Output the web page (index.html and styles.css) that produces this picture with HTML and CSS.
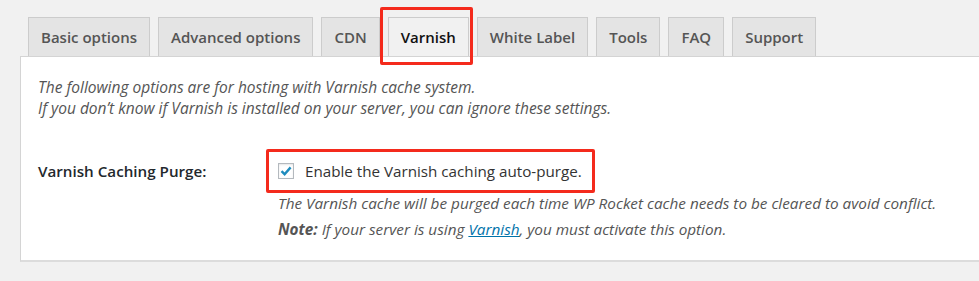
FILE: index.html
```html
<!DOCTYPE html>
<html lang="en">
<head>
    <meta charset="UTF-8">
    <title>WP Rocket - Varnish</title>
    <link rel="stylesheet" href="styles.css">
</head>
<body>
    <div class="wrap">
        <div class="nav-tabs">
            <a class="nav-tab" href="#">Basic options</a>
            <a class="nav-tab" href="#">Advanced options</a>
            <a class="nav-tab" href="#">CDN</a>
            <span class="highlight-wrap">
                <a class="nav-tab nav-tab-active" href="#">Varnish</a>
                <span class="highlight highlight-tab"></span>
            </span>
            <a class="nav-tab" href="#">White Label</a>
            <a class="nav-tab" href="#">Tools</a>
            <a class="nav-tab" href="#">FAQ</a>
            <a class="nav-tab" href="#">Support</a>
        </div>
        <div class="panel">
            <p class="intro">The following options are for hosting with Varnish cache system.<br>
            If you don’t know if Varnish is installed on your server, you can ignore these settings.</p>
            <div class="field-row">
                <div class="field-label">Varnish Caching Purge:</div>
                <div class="field-body">
                    <span class="highlight-wrap">
                        <label class="check-label"><span class="checkbox checked">
                            <svg width="12" height="10" viewBox="0 0 12 10"><path d="M1.5 5.2 L4.6 8.2 L10.6 1.4" fill="none" stroke="#1e8cbe" stroke-width="2.4"/></svg>
                        </span>Enable the Varnish caching auto-purge.</label>
                        <span class="highlight highlight-check"></span>
                    </span>
                    <p class="description first">The Varnish cache will be purged each time WP Rocket cache needs to be cleared to avoid conflict.</p>
                    <p class="description"><strong>Note:</strong> If your server is using <a href="#">Varnish</a>, you must activate this option.</p>
                </div>
            </div>
        </div>
    </div>
</body>
</html>
```

FILE: styles.css
```css
body {
    margin: 0;
    background-color: #f1f1f1;
    font-family: "Open Sans", "Liberation Sans", sans-serif;
    color: #444;
}
.wrap {
    padding-top: 17px;
    padding-left: 20px;
}
.nav-tabs {
    display: flex;
    gap: 8px;
    padding-left: 8px;
}
.nav-tab {
    display: block;
    height: 38px;
    line-height: 38px;
    padding: 0 12px;
    border: 1px solid #ccc;
    border-bottom: none;
    background-color: #e4e4e4;
    color: #555;
    font-size: 15px;
    font-weight: 600;
    text-decoration: none;
}
.nav-tab-active {
    background-color: #f1f1f1;
    color: #111;
}
.highlight-wrap {
    position: relative;
    display: inline-block;
}
.highlight {
    position: absolute;
    border: 3px solid #f42a1c;
    border-radius: 2px;
}
.highlight-tab {
    left: -8px;
    right: -4px;
    top: -10px;
    bottom: -9px;
}
.highlight-check {
    left: -12px;
    right: -13px;
    top: -10px;
    bottom: -10px;
}
.panel {
    background-color: #fff;
    border-top: 1px solid #d4d4d4;
    border-left: 1px solid #d4d4d4;
    border-bottom: 2px solid #dcdcdc;
    padding: 20px 17px 18px;
}
.intro {
    margin: 0;
    font-size: 15.5px;
    line-height: 21px;
    font-style: italic;
    color: #555;
}
.field-row {
    display: grid;
    grid-template-columns: 240px 1fr;
    margin-top: 40px;
}
.field-label {
    font-size: 15.2px;
    font-weight: 600;
    line-height: 24px;
    color: #23282d;
}
.check-label {
    display: flex;
    align-items: center;
    line-height: 24px;
    font-size: 15.2px;
    color: #333;
}
.checkbox {
    display: inline-flex;
    align-items: center;
    justify-content: center;
    width: 14px;
    height: 14px;
    border: 1px solid #b4b9be;
    background-color: #fff;
    box-shadow: inset 0 1px 2px rgba(0, 0, 0, 0.1);
    margin-right: 11px;
}
.description {
    margin: 0;
    font-size: 15.3px;
    line-height: 26px;
    font-style: italic;
    color: #555;
}
.description.first {
    margin-top: 7px;
}
.description strong {
    font-weight: 700;
}
.description a {
    color: #0073aa;
}
```
